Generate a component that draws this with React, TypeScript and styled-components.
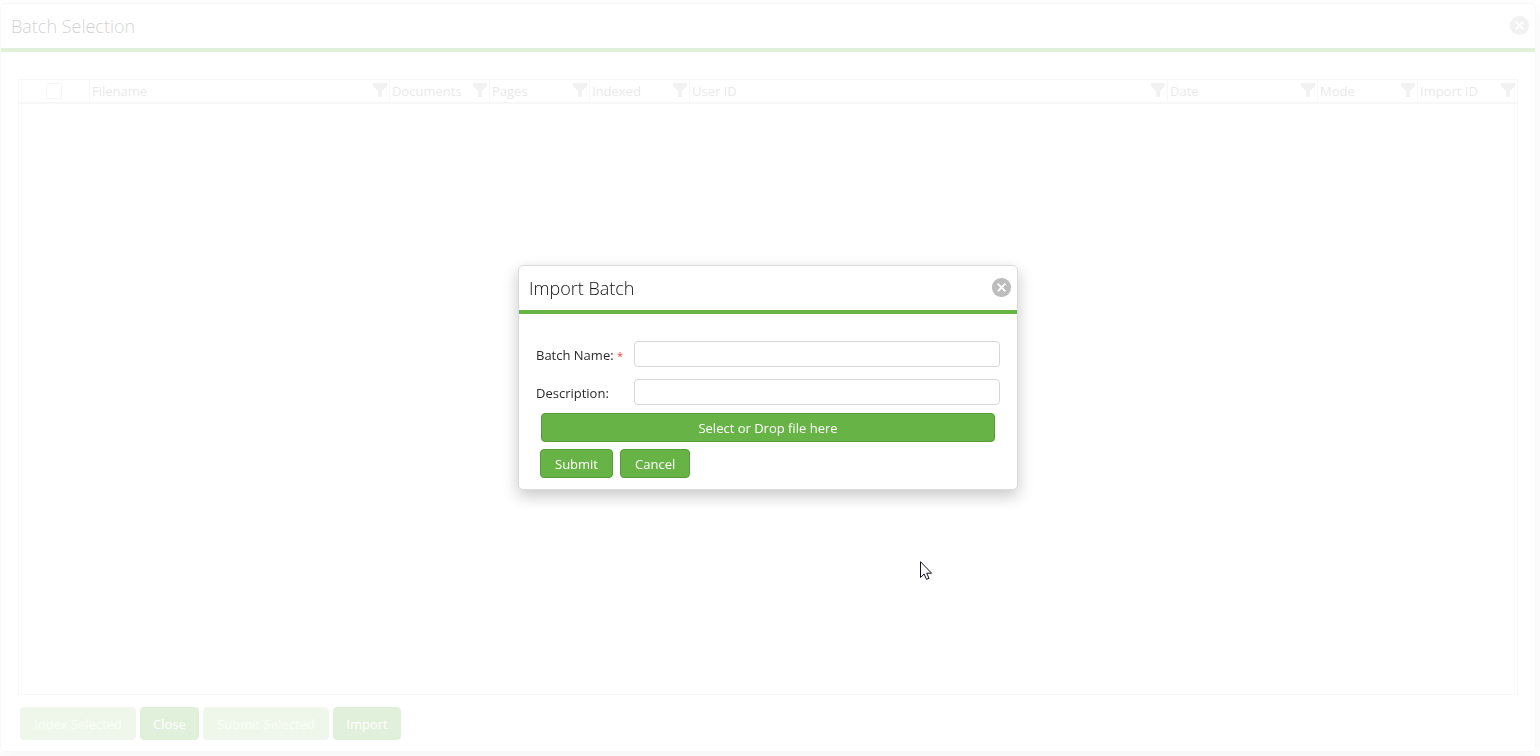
import React from "react";
import styled, { createGlobalStyle } from "styled-components";

const GlobalStyle = createGlobalStyle`
  *, *::before, *::after { box-sizing: border-box; }
  body {
    margin: 0;
    background: #fff;
    color: #2b2b2b;
    font-family: "Segoe UI", "Open Sans", "Noto Sans", sans-serif;
    font-size: 13px;
    line-height: 20px;
  }
  button, input { font: inherit; }
`;

const green = "#68b345";

const Page = styled.div`
  display: flex;
  min-height: 100vh;
  padding: 3px 4px 4px 0;
`;

const Window = styled.main`
  flex: 1;
  min-width: 0;
  display: flex;
  flex-direction: column;
  background: #fff;
  border: 1px solid #dcdcdc;
  border-radius: 5px;
  box-shadow: 0 4px 14px rgba(0, 0, 0, 0.2);
`;

const TitleBar = styled.header`
  display: flex;
  align-items: center;
  justify-content: space-between;
  height: 48px;
  padding: 0 6px 2px 10px;
  border-bottom: 4px solid ${green};
`;

const Title = styled.h1`
  margin: 0;
  padding-top: 2px;
  color: #111;
  font-size: 18px;
  font-weight: 300;
  line-height: 24px;
`;

const RoundButton = styled.button`
  display: flex;
  align-items: center;
  justify-content: center;
  width: 19px;
  height: 19px;
  padding: 0;
  border: 0;
  border-radius: 9px;
  background: #bdbdbd;
  cursor: pointer;
`;

const Content = styled.div`
  flex: 1;
  display: flex;
  flex-direction: column;
  padding: 27px 17px 11px;
`;

const Grid = styled.div`
  flex: 1;
  border: 1px solid #d8d8d8;
`;

const Table = styled.table`
  width: 100%;
  table-layout: fixed;
  border-collapse: separate;
  border-spacing: 0;
  border-bottom: 2px solid #d8d8d8;
`;

const HeadCell = styled.th<{ $width?: number }>`
  width: ${(p) => (p.$width ? `${p.$width}px` : "auto")};
  height: 22px;
  padding: 0 2px;
  border-right: 1px solid #d8d8d8;
  color: #8c8c8c;
  font-weight: 400;
  text-align: left;
  &:last-child { border-right: 0; }
`;

const HeadInner = styled.div<{ $center?: boolean }>`
  display: flex;
  align-items: center;
  justify-content: ${(p) => (p.$center ? "center" : "space-between")};
  height: 22px;
`;

const HeadLabel = styled.span`
  white-space: nowrap;
`;

const FilterButton = styled.button`
  display: flex;
  padding: 0 0 2px;
  border: 0;
  background: none;
  color: #bdbdbd;
  cursor: pointer;
`;

const Tick = styled.input`
  appearance: none;
  width: 16px;
  height: 16px;
  margin: 0;
  border: 1px solid #d0d0d0;
  border-radius: 1px;
  background: #fff;
`;

const Footer = styled.footer`
  display: flex;
  gap: 4px;
  padding: 12px 2px 0;
`;

const FooterButton = styled.button<{ $width: number }>`
  min-width: ${(p) => p.$width}px;
  height: 33px;
  padding: 0 8px;
  border: 1px solid #62ad40;
  border-radius: 4px;
  background: ${green};
  color: #fff;
  white-space: nowrap;
  &:disabled {
    border-color: #b0d79c;
    background: #b0d79c;
    color: #daf0d0;
  }
`;

const Overlay = styled.div`
  position: fixed;
  inset: 0;
  display: flex;
  align-items: center;
  justify-content: center;
  padding: 0 4px 1px 0;
  background: rgba(255, 255, 255, 0.8);
`;

const Dialog = styled.section`
  width: 500px;
  max-width: 100%;
  background: #fff;
  border: 1px solid #dcdcdc;
  border-radius: 5px;
  box-shadow: 0 6px 16px rgba(0, 0, 0, 0.22);
`;

const Form = styled.form`
  display: flex;
  flex-direction: column;
  padding: 27px 17px 11px;
`;

const Field = styled.div`
  display: flex;
  align-items: center;
  margin-bottom: 12px;
  & + & { margin-bottom: 8px; }
`;

const Label = styled.label`
  width: 98px;
  padding-top: 1px;
  white-space: nowrap;
`;

const Required = styled.span`
  color: #f0442e;
  font-size: 11px;
  line-height: 1;
`;

const TextInput = styled.input`
  flex: 1;
  min-width: 0;
  height: 26px;
  padding: 0 6px;
  border: 1px solid #d8d8d8;
  border-radius: 4px;
  background: #fff;
  outline: none;
`;

const ActionButton = styled.button`
  height: 29px;
  padding: 0 14px;
  border: 1px solid #579c38;
  border-radius: 4px;
  background: ${green};
  color: #fff;
  cursor: pointer;
`;

const DropButton = styled(ActionButton)`
  margin: 0 5px;
`;

const Actions = styled.div`
  display: flex;
  gap: 7px;
  padding: 7px 4px 0;
`;

const Pointer = styled.svg`
  position: fixed;
  left: 920px;
  top: 561px;
  pointer-events: none;
`;

const columns: { label: string; width?: number }[] = [
  { label: "Filename", width: 300 },
  { label: "Documents", width: 100 },
  { label: "Pages", width: 100 },
  { label: "Indexed", width: 100 },
  { label: "User ID" },
  { label: "Date", width: 150 },
  { label: "Mode", width: 100 },
  { label: "Import ID", width: 99 },
];

const CloseButton = () => (
  <RoundButton type="button" aria-label="Close window">
    <svg width="9" height="9" viewBox="0 0 9 9" fill="none" stroke="#fff" strokeWidth="1.9">
      <path d="M0.7 0.7 8.3 8.3M8.3 0.7 0.7 8.3" />
    </svg>
  </RoundButton>
);

export default function App() {
  return (
    <>
      <GlobalStyle />
      <Page>
        <Window>
          <TitleBar>
            <Title>Batch Selection</Title>
            <CloseButton />
          </TitleBar>
          <Content>
            <Grid>
              <Table>
                <thead>
                  <tr>
                    <HeadCell $width={71}>
                      <HeadInner $center>
                        <Tick type="checkbox" aria-label="Select all" />
                      </HeadInner>
                    </HeadCell>
                    {columns.map((c) => (
                      <HeadCell key={c.label} $width={c.width}>
                        <HeadInner>
                          <HeadLabel>{c.label}</HeadLabel>
                          <FilterButton type="button" aria-label={`Filter ${c.label}`}>
                            <svg width="14" height="14" viewBox="0 0 14 14" fill="currentColor">
                              <path d="M0 0H14V3L9 8V14H5V8L0 3Z" />
                            </svg>
                          </FilterButton>
                        </HeadInner>
                      </HeadCell>
                    ))}
                  </tr>
                </thead>
              </Table>
            </Grid>
            <Footer>
              <FooterButton type="button" $width={116} disabled>Index Selected</FooterButton>
              <FooterButton type="button" $width={59}>Close</FooterButton>
              <FooterButton type="button" $width={126} disabled>Submit Selected</FooterButton>
              <FooterButton type="button" $width={68}>Import</FooterButton>
            </Footer>
          </Content>
        </Window>
      </Page>
      <Overlay>
        <Dialog role="dialog" aria-labelledby="import-title">
          <TitleBar>
            <Title as="h2" id="import-title">Import Batch</Title>
            <CloseButton />
          </TitleBar>
          <Form>
            <Field>
              <Label htmlFor="batch-name">
                Batch Name: <Required>*</Required>
              </Label>
              <TextInput id="batch-name" type="text" />
            </Field>
            <Field>
              <Label htmlFor="description">Description:</Label>
              <TextInput id="description" type="text" />
            </Field>
            <DropButton type="button">Select or Drop file here</DropButton>
            <Actions>
              <ActionButton type="button">Submit</ActionButton>
              <ActionButton type="button">Cancel</ActionButton>
            </Actions>
          </Form>
        </Dialog>
      </Overlay>
      <Pointer width="13" height="20" viewBox="0 0 13 20" aria-hidden="true">
        <path
          d="M0.5 0.7V16.5L4.2 13L6.5 18.4L9 17.3L6.7 12.2H11.6Z"
          fill="#fff"
          stroke="#111122"
          strokeWidth="1"
        />
      </Pointer>
    </>
  );
}
